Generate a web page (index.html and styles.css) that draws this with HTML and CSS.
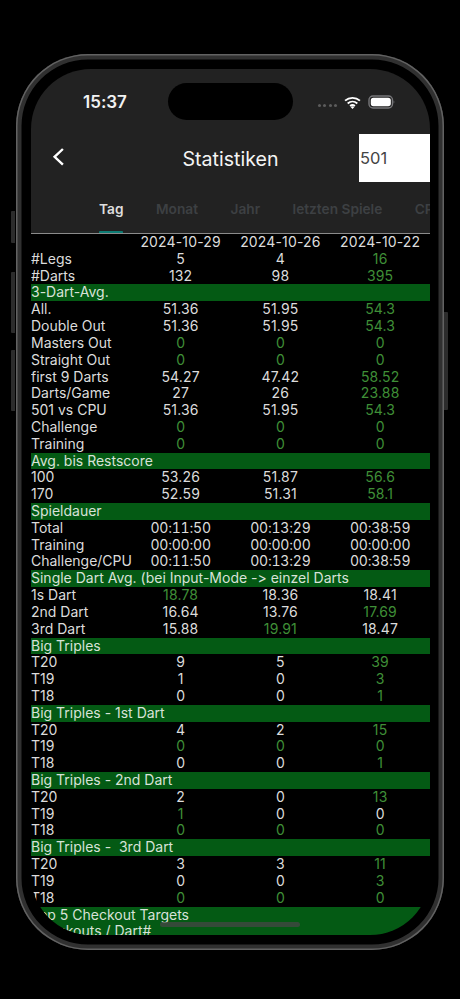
FILE: index.html
```html
<!DOCTYPE html>
<html lang="de">
<head>
<meta charset="utf-8">
<title>Statistiken</title>
<link rel="stylesheet" href="styles.css">
</head>
<body>
<div class="phone">
  <div class="side-btn btn-a"></div>
  <div class="side-btn btn-b"></div>
  <div class="side-btn btn-c"></div>
  <div class="side-btn btn-d"></div>
  <div class="screen">
    <header class="chrome">
      <div class="status">
        <span class="time">15:37</span>
        <div class="status-icons">
          <span class="signal"><i></i><i></i><i></i><i></i></span>
          <svg class="wifi" viewBox="0 0 18 14" width="17" height="13"><path d="M1 5a12 12 0 0 1 16 0M3.8 8a8 8 0 0 1 10.4 0M6.4 10.7a4.2 4.2 0 0 1 5.2 0" fill="none" stroke="#fff" stroke-width="2"/><path d="M9 14l-2-2.2a3 3 0 0 1 4 0z" fill="#fff"/></svg>
          <svg class="battery" viewBox="0 0 27 14" width="27" height="14"><rect x="1" y="1" width="23.5" height="12" rx="4" fill="none" stroke="#77777a" stroke-width="1.4"/><rect x="2.8" y="2.8" width="20" height="8.4" rx="2.6" fill="#fff"/><path d="M25.6 5.5a1.8 1.8 0 0 1 0 3z" fill="#77777a"/></svg>
        </div>
      </div>
      <div class="island"></div>
      <div class="navbar">
        <svg class="back" viewBox="0 0 14 20" width="14" height="20"><path d="M10.9 2L2.6 9.8l8.3 7.8" fill="none" stroke="#fff" stroke-width="2.4"/></svg>
        <h1 class="title">Statistiken</h1>
        <div class="select">501</div>
      </div>
      <nav class="tabs">
        <span class="tab active">Tag</span>
        <span class="tab">Monat</span>
        <span class="tab">Jahr</span>
        <span class="tab">letzten Spiele</span>
        <span class="tab">CPU</span>
      </nav>
    </header>
    <main class="table">
      <div class="row"><span></span><span>2024-10-29</span><span>2024-10-26</span><span>2024-10-22</span></div>
      <div class="row"><span>#Legs</span><span>5</span><span>4</span><span class="good">16</span></div>
      <div class="row"><span>#Darts</span><span>132</span><span>98</span><span class="good">395</span></div>
      <div class="bar">3-Dart-Avg.</div>
      <div class="row"><span>All.</span><span>51.36</span><span>51.95</span><span class="good">54.3</span></div>
      <div class="row"><span>Double Out</span><span>51.36</span><span>51.95</span><span class="good">54.3</span></div>
      <div class="row"><span>Masters Out</span><span class="good">0</span><span class="good">0</span><span class="good">0</span></div>
      <div class="row"><span>Straight Out</span><span class="good">0</span><span class="good">0</span><span class="good">0</span></div>
      <div class="row"><span>first 9 Darts</span><span>54.27</span><span>47.42</span><span class="good">58.52</span></div>
      <div class="row"><span>Darts/Game</span><span>27</span><span>26</span><span class="good">23.88</span></div>
      <div class="row"><span>501 vs CPU</span><span>51.36</span><span>51.95</span><span class="good">54.3</span></div>
      <div class="row"><span>Challenge</span><span class="good">0</span><span class="good">0</span><span class="good">0</span></div>
      <div class="row"><span>Training</span><span class="good">0</span><span class="good">0</span><span class="good">0</span></div>
      <div class="bar">Avg. bis Restscore</div>
      <div class="row"><span>100</span><span>53.26</span><span>51.87</span><span class="good">56.6</span></div>
      <div class="row"><span>170</span><span>52.59</span><span>51.31</span><span class="good">58.1</span></div>
      <div class="bar">Spieldauer</div>
      <div class="row durations"><span>Total</span><span>00:11:50</span><span>00:13:29</span><span>00:38:59</span></div>
      <div class="row durations"><span>Training</span><span>00:00:00</span><span>00:00:00</span><span>00:00:00</span></div>
      <div class="row durations"><span>Challenge/CPU</span><span>00:11:50</span><span>00:13:29</span><span>00:38:59</span></div>
      <div class="bar">Single Dart Avg. (bei Input-Mode -&gt; einzel Darts</div>
      <div class="row"><span>1s Dart</span><span class="good">18.78</span><span>18.36</span><span>18.41</span></div>
      <div class="row"><span>2nd Dart</span><span>16.64</span><span>13.76</span><span class="good">17.69</span></div>
      <div class="row"><span>3rd Dart</span><span>15.88</span><span class="good">19.91</span><span>18.47</span></div>
      <div class="bar">Big Triples</div>
      <div class="row"><span>T20</span><span>9</span><span>5</span><span class="good">39</span></div>
      <div class="row"><span>T19</span><span>1</span><span>0</span><span class="good">3</span></div>
      <div class="row"><span>T18</span><span>0</span><span>0</span><span class="good">1</span></div>
      <div class="bar">Big Triples - 1st Dart</div>
      <div class="row"><span>T20</span><span>4</span><span>2</span><span class="good">15</span></div>
      <div class="row"><span>T19</span><span class="good">0</span><span class="good">0</span><span class="good">0</span></div>
      <div class="row"><span>T18</span><span>0</span><span>0</span><span class="good">1</span></div>
      <div class="bar">Big Triples - 2nd Dart</div>
      <div class="row"><span>T20</span><span>2</span><span>0</span><span class="good">13</span></div>
      <div class="row"><span>T19</span><span class="good">1</span><span>0</span><span>0</span></div>
      <div class="row"><span>T18</span><span class="good">0</span><span class="good">0</span><span class="good">0</span></div>
      <div class="bar">Big Triples -  3rd Dart</div>
      <div class="row"><span>T20</span><span>3</span><span>3</span><span class="good">11</span></div>
      <div class="row"><span>T19</span><span>0</span><span>0</span><span class="good">3</span></div>
      <div class="row"><span>T18</span><span class="good">0</span><span class="good">0</span><span class="good">0</span></div>
      <div class="bar">Top 5 Checkout Targets</div>
      <div class="bar">Checkouts / Dart#</div>
    </main>
    <div class="home"></div>
  </div>
</div>
</body>
</html>
```
FILE: styles.css
```css
* { box-sizing: border-box; }
html, body { margin: 0; padding: 0; background: #000; }
body { width: 460px; height: 999px; overflow: hidden; font-family: "Inter", "Liberation Sans", sans-serif; font-variant-ligatures: none; font-feature-settings: "calt" 0; }
.phone { position: relative; width: 428px; height: 896px; margin: 54px 0 0 16px; padding: 15px; border-radius: 72px; background: #000; box-shadow: inset 0 0 0 1.5px #626262, inset 0 0 0 5.5px #303030; }
.side-btn { position: absolute; background: #2c2c2c; width: 4px; }
.btn-a { left: -5px; top: 157px; height: 32px; border-radius: 1px 0 0 1px; }
.btn-b { left: -5px; top: 218px; height: 61px; border-radius: 1px 0 0 1px; }
.btn-c { left: -5px; top: 296px; height: 61px; border-radius: 1px 0 0 1px; }
.btn-d { right: -4px; top: 258px; height: 98px; border-radius: 0 1px 1px 0; }
.screen { position: relative; width: 399px; height: 866px; border-radius: 60px; overflow: hidden; background: #000; }
.chrome { height: 165px; background: #222; position: relative; border-bottom: 1.5px solid #8b8b8b; }
.status { display: flex; justify-content: space-between; align-items: center; height: 28px; padding: 19px 35px 0 52px; box-sizing: content-box; }
.time { font-size: 17px; font-weight: 600; color: #f2f2f2; }
.status-icons { display: flex; align-items: center; gap: 7px; }
.wifi { margin-top: 1px; }
.signal { display: flex; gap: 2.3px; margin-top: 7px; }
.signal i { width: 3px; height: 3px; border-radius: 50%; background: #5c5c5c; }
.island { position: absolute; left: 137px; top: 14px; width: 125px; height: 37px; border-radius: 19px; background: #000; }
.navbar { display: flex; align-items: center; justify-content: center; position: relative; height: 48px; margin-top: 19px; }
.back { position: absolute; left: 21px; top: 12px; }
.title { margin: 0; font-size: 19.6px; font-weight: 400; color: #f4f4f4; }
.select { position: absolute; right: 0; top: -1px; width: 71px; height: 48px; background: #fff; color: #444; font-size: 16.5px; line-height: 49px; padding-left: 1px; }
.tabs { display: flex; gap: 32.5px; height: 50px; padding: 18px 0 0 68px; white-space: nowrap; overflow: hidden; font-size: 13.7px; font-weight: 600; color: #3d4043; }
.tab.active { color: #dedede; position: relative; }
.tab.active::after { content: ""; position: absolute; left: 0; right: 0; top: 30px; height: 2px; border-radius: 1px 1px 0 0; background: #0d7c74; }
.table { font-size: 14px; line-height: 16.825px; color: #dcdcdc; }
.row { display: grid; grid-template-columns: repeat(4, 99.75px); height: 16.825px; white-space: nowrap; }
.row span { text-align: center; letter-spacing: 0.15px; }
.row span:first-child { text-align: left; letter-spacing: 0; }
.row span.good { color: #3f8f37; }
.durations span { font-feature-settings: "calt" 0, "tnum" 1; letter-spacing: -0.2px; }
.bar { background: #045a14; color: #d8e2d8; height: 16.825px; white-space: pre; }
.home { position: absolute; left: 129px; bottom: 8px; width: 140px; height: 5px; border-radius: 3px; background: rgba(70,70,70,.75); }
```
